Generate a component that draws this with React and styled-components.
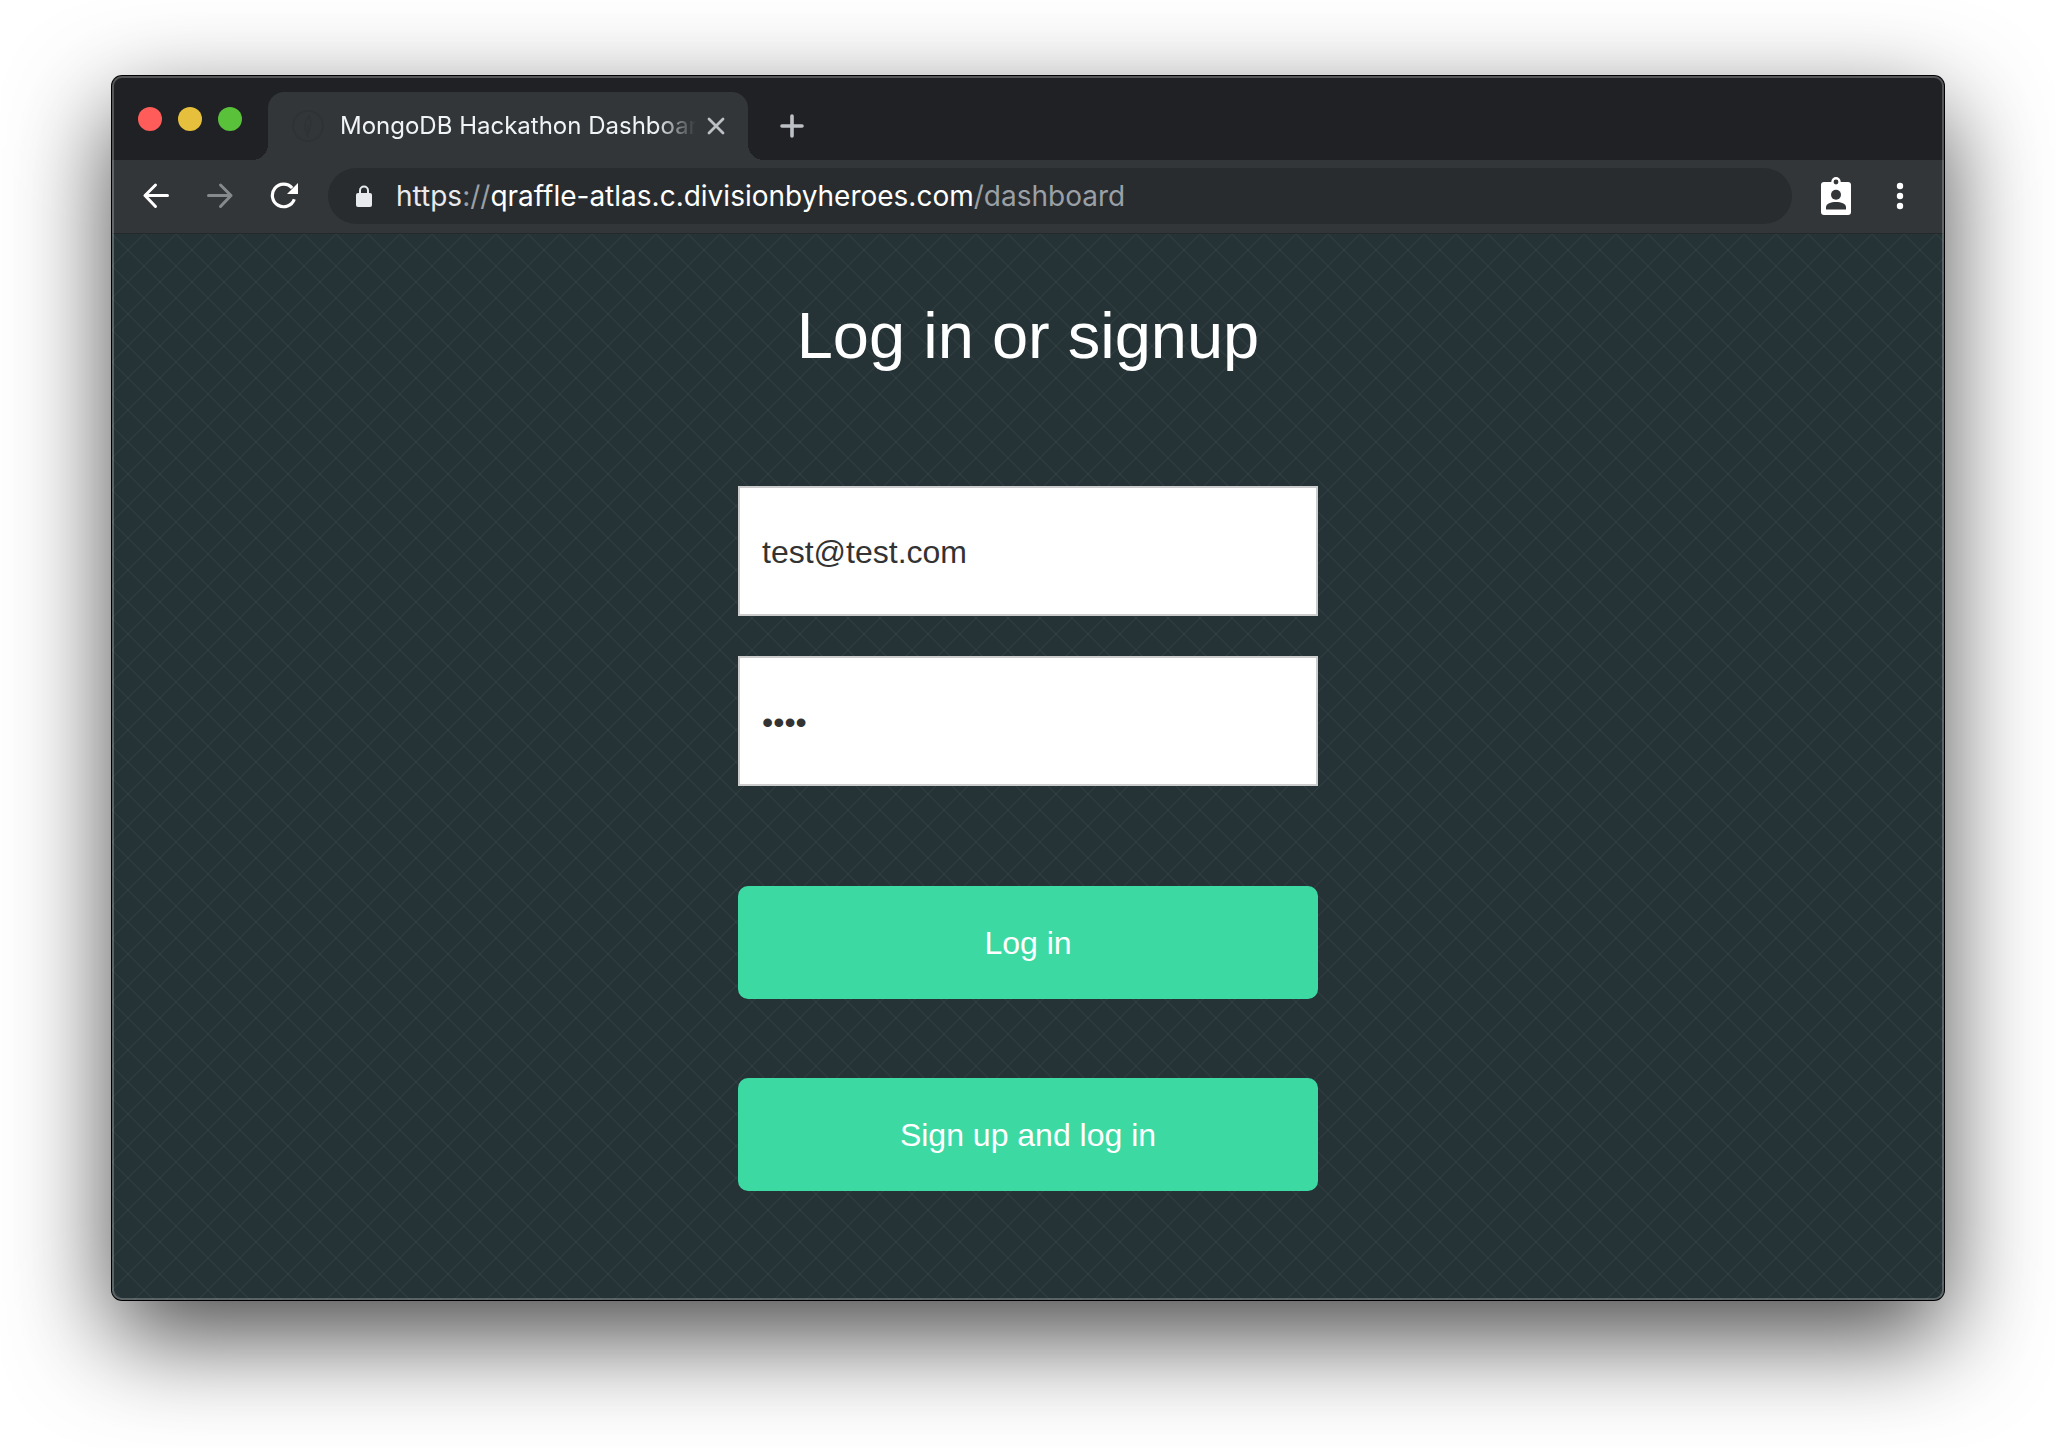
import React from "react";
import styled, { createGlobalStyle } from "styled-components";

const GlobalStyle = createGlobalStyle`
  * {
    box-sizing: border-box;
  }
  body {
    margin: 0;
    background: #fff;
  }
  button,
  input {
    font: inherit;
  }
`;

const Desktop = styled.div`
  padding: 76px 112px 148px;
  font-family: "Liberation Sans", Arial, sans-serif;
`;

const Window = styled.div`
  position: relative;
  border-radius: 10px;
  background: #323639;
  box-shadow: 0 0 0 1px #000, 0 36px 100px rgba(0, 0, 0, 0.72);

  /* light rim drawn over the window's contents */
  &::after {
    content: "";
    position: absolute;
    inset: 0;
    border: 2px solid rgba(255, 255, 255, 0.24);
    border-radius: 10px;
    pointer-events: none;
  }
`;

const TabStrip = styled.div`
  display: flex;
  align-items: flex-end;
  height: 84px;
  padding-left: 26px;
  background: #202124;
  border-radius: 10px 10px 0 0;
  font-family: Inter, sans-serif;
`;

const Lights = styled.div`
  display: flex;
  gap: 16px;
  margin-right: 26px;
  padding-bottom: 29px;
`;

const Light = styled.button`
  width: 24px;
  height: 24px;
  padding: 0;
  border: 0;
  border-radius: 50%;
  background: ${(props) => props.$color};
`;

const Tab = styled.div`
  position: relative;
  display: flex;
  align-items: center;
  width: 480px;
  height: 68px;
  padding: 0 16px 0 24px;
  border-radius: 16px 16px 0 0;
  background: #323639;

  &::before,
  &::after {
    content: "";
    position: absolute;
    bottom: 0;
    width: 16px;
    height: 16px;
  }
  &::before {
    right: 100%;
    background: radial-gradient(circle at 0 0, transparent 16px, #323639 16px);
  }
  &::after {
    left: 100%;
    background: radial-gradient(circle at 100% 0, transparent 16px, #323639 16px);
  }
`;

const TabTitle = styled.span`
  flex: 1;
  margin: 0 4px 0 16px;
  overflow: hidden;
  white-space: nowrap;
  font-size: 24px;
  line-height: 32px;
  color: #f1f3f4;
  mask-image: linear-gradient(to right, #000 calc(100% - 40px), transparent);
`;

const IconButton = styled.button`
  display: flex;
  align-items: center;
  justify-content: center;
  flex: none;
  width: ${(props) => props.$width || 64}px;
  height: 56px;
  padding: 0;
  border: 0;
  background: none;
  color: ${(props) => props.$color || "#fff"};
`;

const NewTab = styled(IconButton)`
  height: 68px;
  margin-left: 16px;
`;

const Toolbar = styled.div`
  display: flex;
  align-items: center;
  height: 74px;
  padding: 0 12px 2px;
  border-bottom: 1px solid #26292b;
`;

const AddressBar = styled.div`
  display: flex;
  align-items: center;
  flex: 1;
  gap: 20px;
  height: 56px;
  margin: 0 12px;
  padding: 0 24px;
  border-radius: 28px;
  background: #282c2f;
  font-family: Inter, sans-serif;
  font-size: 28px;
  line-height: 36px;
  white-space: nowrap;
`;

const Url = styled.span`
  color: #9aa0a6;
`;

const UrlPart = styled.span`
  color: ${(props) => props.$color};
`;

const Page = styled.main`
  padding: 62px 24px 109px;
  border-radius: 0 0 10px 10px;
  background-color: #253236;
  background-image: linear-gradient(
      45deg,
      transparent calc(50% - 1px),
      rgba(255, 255, 255, 0.05) 50%,
      transparent calc(50% + 1px)
    ),
    linear-gradient(
      -45deg,
      transparent calc(50% - 1px),
      rgba(255, 255, 255, 0.05) 50%,
      transparent calc(50% + 1px)
    );
  background-size: 32px 32px;
`;

const Title = styled.h1`
  margin: 0 0 110px;
  font-size: 65px;
  font-weight: 300;
  line-height: 80px;
  text-align: center;
  color: #fff;
`;

const Form = styled.form`
  display: flex;
  flex-direction: column;
  max-width: 580px;
  margin: 0 auto;
  font-size: 32px;
`;

const Field = styled.input`
  height: 130px;
  margin-bottom: 40px;
  padding: 3px 22px 0;
  border: 2px solid #ccc;
  border-radius: 0;
  background: #fff;
  color: #333;
  outline: none;
`;

const Actions = styled.div`
  display: flex;
  flex-direction: column;
  gap: 79px;
  margin-top: 60px;
`;

const SubmitButton = styled.button`
  height: 113px;
  padding: 2px 0 0;
  border: 0;
  border-radius: 10px;
  background: #3dd9a3;
  color: #fff;
`;

function BackIcon() {
  return (
    <svg width="28" height="28" viewBox="0 0 28 28" fill="none" stroke="currentColor" strokeWidth="3" strokeLinecap="round" strokeLinejoin="round">
      <path d="M25.5 13.5H3M13.5 3L3 13.5L13.5 24.5" />
    </svg>
  );
}

function ForwardIcon() {
  return (
    <svg width="28" height="28" viewBox="0 0 28 28" fill="none" stroke="currentColor" strokeWidth="3" strokeLinecap="round" strokeLinejoin="round">
      <path d="M2.5 13.5H25M14.5 3L25 13.5L14.5 24.5" />
    </svg>
  );
}

function ReloadIcon() {
  return (
    <svg width="28" height="28" viewBox="0 0 28 28">
      <path d="M24.3 17.2A11.3 11.3 0 1 1 22.2 6" fill="none" stroke="currentColor" strokeWidth="3.2" />
      <path d="M28 1V12H17Z" fill="currentColor" />
    </svg>
  );
}

function LockIcon() {
  return (
    <svg width="24" height="24" viewBox="0 0 24 24">
      <path d="M8 10V6.5a4 4 0 0 1 8 0V10" fill="none" stroke="#e8eaed" strokeWidth="2" />
      <rect x="4" y="9" width="16" height="14" rx="2" fill="#e8eaed" />
    </svg>
  );
}

function BadgeIcon() {
  return (
    <svg width="30" height="38" viewBox="0 0 30 38">
      <circle cx="15" cy="4.7" r="4.7" fill="currentColor" />
      <rect y="5" width="30" height="33" rx="3" fill="currentColor" />
      <g fill="#323639">
        <circle cx="15" cy="5" r="2.4" />
        <circle cx="15" cy="17.7" r="5" />
        <path d="M5 32.5V30C5 23.2 25 23.2 25 30V32.5Z" />
      </g>
    </svg>
  );
}

function MenuIcon() {
  return (
    <svg width="8" height="28" viewBox="0 0 8 28" fill="currentColor">
      <circle cx="4" cy="4" r="3.2" />
      <circle cx="4" cy="14" r="3.2" />
      <circle cx="4" cy="24" r="3.2" />
    </svg>
  );
}

function CloseIcon() {
  return (
    <svg width="18" height="18" viewBox="0 0 18 18" stroke="currentColor" strokeWidth="2.8" strokeLinecap="round">
      <path d="M2 2L16 16M16 2L2 16" />
    </svg>
  );
}

function PlusIcon() {
  return (
    <svg width="24" height="24" viewBox="0 0 24 24" stroke="currentColor" strokeWidth="3.6" strokeLinecap="round">
      <path d="M12 2V22M2 12H22" />
    </svg>
  );
}

function Favicon() {
  return (
    <svg width="32" height="32" viewBox="0 0 32 32" fill="none" stroke="#2f3235">
      <circle cx="16" cy="16" r="15" strokeWidth="1.5" />
      <path d="M17 6C12 12 12 19 15 25C19 20 20 12 17 6ZM16 14V28" strokeWidth="1.2" />
    </svg>
  );
}

function Browser({ children }) {
  return (
    <Window>
      <TabStrip>
        <Lights>
          <Light $color="#ff5c5a" aria-label="Close window" />
          <Light $color="#e6bf3c" aria-label="Minimize" />
          <Light $color="#59c13a" aria-label="Zoom" />
        </Lights>
        <Tab>
          <Favicon />
          <TabTitle>MongoDB Hackathon Dashboard</TabTitle>
          <IconButton $width={32} $color="#bdc1c6" aria-label="Close tab">
            <CloseIcon />
          </IconButton>
        </Tab>
        <NewTab $width={56} $color="#bdc1c6" aria-label="New tab">
          <PlusIcon />
        </NewTab>
      </TabStrip>
      <Toolbar>
        <IconButton aria-label="Back">
          <BackIcon />
        </IconButton>
        <IconButton $color="#868a8d" aria-label="Forward">
          <ForwardIcon />
        </IconButton>
        <IconButton aria-label="Reload">
          <ReloadIcon />
        </IconButton>
        <AddressBar>
          <LockIcon />
          <Url>
            <UrlPart $color="#e8eaed">https</UrlPart>://
            <UrlPart $color="#fff">qraffle-atlas.c.divisionbyheroes.com</UrlPart>
            /dashboard
          </Url>
        </AddressBar>
        <IconButton aria-label="Profile">
          <BadgeIcon />
        </IconButton>
        <IconButton aria-label="Menu">
          <MenuIcon />
        </IconButton>
      </Toolbar>
      {children}
    </Window>
  );
}

function App() {
  return (
    <Desktop>
      <GlobalStyle />
      <Browser>
        <Page>
          <Title>Log in or signup</Title>
          <Form onSubmit={(e) => e.preventDefault()}>
            <Field type="email" aria-label="Email" defaultValue="test@test.com" />
            <Field type="password" aria-label="Password" defaultValue="test" />
            <Actions>
              <SubmitButton type="submit">Log in</SubmitButton>
              <SubmitButton type="button">Sign up and log in</SubmitButton>
            </Actions>
          </Form>
        </Page>
      </Browser>
    </Desktop>
  );
}

export default App;
